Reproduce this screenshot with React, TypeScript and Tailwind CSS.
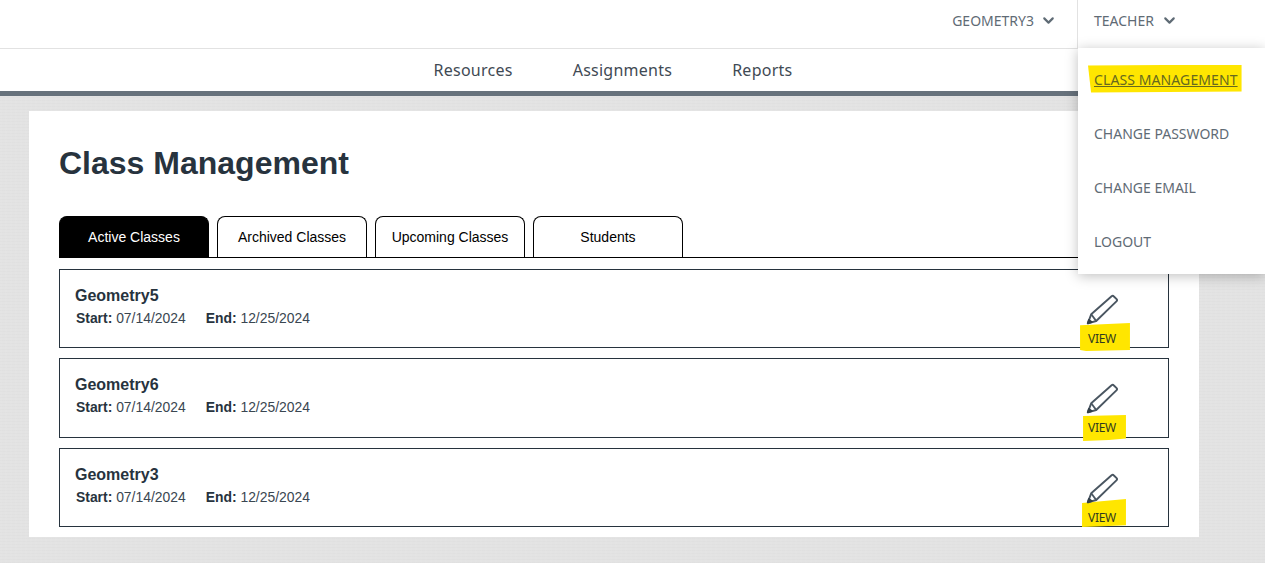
import { ChevronDown } from "lucide-react"

const tabs = ["Active Classes", "Archived Classes", "Upcoming Classes", "Students"]

const classes = [
    { name: "Geometry5", row: "h-[79px]", mark: "left-[-8px] right-[-14px] top-[-9px] h-[28px] [clip-path:polygon(0_8%,100%_0,100%_96%,12%_100%,0_96%)]" },
    { name: "Geometry6", row: "h-[80px]", mark: "left-[-5px] right-[-10px] top-[-6px] h-[26px] [clip-path:polygon(0_4%,100%_0,100%_90%,60%_96%,0_100%)]" },
    { name: "Geometry3", row: "h-[79px]", mark: "left-[-6px] right-[-10px] top-[-12px] h-[28px] [clip-path:polygon(0_14%,100%_0,100%_94%,60%_96%,0_100%)]" },
]

const menuItems = ["CLASS MANAGEMENT", "CHANGE PASSWORD", "CHANGE EMAIL", "LOGOUT"]

function Pencil() {
    return (
        <svg className="relative z-10" width="34" height="34" viewBox="0 0 34 34" fill="none" stroke="#4a5661" strokeWidth="1.9" strokeLinejoin="round">
            <path d="M2.8 29.3 L6.2 20.3 L26.6 2.3 Q27.8 1.3 28.9 2.5 L31.6 5.2 Q32.6 6.3 31.4 7.4 L11.2 27 Z" />
            <path d="M6.2 20.3 L11.2 27" />
            <path d="M2.8 29.3 L3.9 26 L6.6 28 Z" fill="#33404b" stroke="#33404b" />
        </svg>
    )
}

export default function App() {
    return (
        <div className="relative h-[563px] w-[1265px] overflow-hidden bg-[#e3e3e3] bg-[repeating-linear-gradient(0deg,rgba(0,0,0,0.012)_0px,rgba(0,0,0,0.012)_1px,transparent_1px,transparent_3px),repeating-linear-gradient(90deg,rgba(255,255,255,0.03)_0px,rgba(255,255,255,0.03)_2px,transparent_2px,transparent_5px)] font-['Liberation_Sans',sans-serif]">
            {/* Top bar */}
            <header className="flex h-[49px] justify-end border-b border-[#e2e2e2] bg-white pb-2 font-['Noto_Sans',sans-serif] text-[14px] text-[#5f6b75]">
                <div className="flex items-center gap-[6px] pr-[20px]">
                    <span>GEOMETRY3</span>
                    <ChevronDown className="h-[17px] w-[17px]" strokeWidth={3} />
                </div>
                <div className="flex w-[188px] items-center gap-[7px] pl-[17px]">
                    <span>TEACHER</span>
                    <ChevronDown className="h-[17px] w-[17px]" strokeWidth={3} />
                </div>
            </header>

            {/* Main nav */}
            <nav className="flex h-[47px] justify-center gap-[60px] border-b-[5px] border-[#67727c] bg-white pt-[9px] pr-[39px] font-['Noto_Sans',sans-serif] text-[16px] tracking-[0.25px] text-[#3f4a54]">
                <span>Resources</span>
                <span>Assignments</span>
                <span>Reports</span>
            </nav>

            {/* Teacher menu */}
            <div className="absolute left-[1078px] top-[48px] z-10 flex h-[226px] w-[187px] flex-col bg-white pl-4 pt-[4px] font-['Noto_Sans',sans-serif] text-[14px] text-[#5f6b75] shadow-[0_2px_12px_rgba(0,0,0,0.25)]">
                {menuItems.map((item, i) => (
                    <div key={item} className="flex h-[54px] items-center">
                        <span className={i === 0 ? "relative z-0 tracking-[0.1px] text-[#66691f] underline" : ""}>
                            {i === 0 && <span className="absolute left-[-6px] right-[-4px] top-[-4px] -z-10 h-[28px] bg-[#ffe600] [clip-path:polygon(0_4%,100%_0,100%_96%,2%_100%)]" />}
                            {item}
                        </span>
                    </div>
                ))}
            </div>
            {/* divider to the left of the teacher dropdown */}
            <div className="absolute left-[1077px] top-0 h-[49px] w-px bg-[#e2e2e2]" />

            {/* Content card */}
            <main className="ml-[29px] mt-[15px] h-[426px] w-[1170px] bg-white px-[30px] pt-[32px]">
                <h1 className="text-[32px] font-bold leading-[40px] text-[#27333e]">Class Management</h1>

                <div className="mt-[33px] flex gap-2 border-b border-black">
                    {tabs.map((tab, i) => (
                        <div
                            key={tab}
                            className={
                                i === 0
                                    ? "flex h-[41px] w-[150px] items-center justify-center rounded-t-lg border border-b-0 border-black bg-black text-[14px] text-white"
                                    : "flex h-[41px] w-[150px] items-center justify-center rounded-t-lg border border-b-0 border-black text-[14px] text-black"
                            }
                        >
                            {tab}
                        </div>
                    ))}
                </div>

                <div className="mt-[11px] flex flex-col gap-[10px]">
                    {classes.map((c) => (
                        <div key={c.name} className={"flex items-start justify-between border border-[#27333e] pl-[15px] pr-[49px] text-[#27333e] " + c.row}>
                            <div className="pt-[16px]">
                                <div className="text-[16px] font-bold leading-[20px]">{c.name}</div>
                                <div className="mt-[4px] flex gap-5 pl-px text-[13.9px] leading-[16px] text-[#3a4651]">
                                    <span><b className="text-[#27333e]">Start:</b> 07/14/2024</span>
                                    <span><b className="text-[#27333e]">End:</b> 12/25/2024</span>
                                </div>
                            </div>
                            <div className="flex flex-col items-center pt-[24px]">
                                <Pencil />
                                <span className="relative z-0 mt-[4px] font-['Noto_Sans',sans-serif] text-[12px] leading-[14px] tracking-[-0.3px] text-[#2f3a20]">
                                    <span className={"absolute -z-10 bg-[#ffe600] " + c.mark} />
                                    VIEW
                                </span>
                            </div>
                        </div>
                    ))}
                </div>
            </main>
        </div>
    )
}
